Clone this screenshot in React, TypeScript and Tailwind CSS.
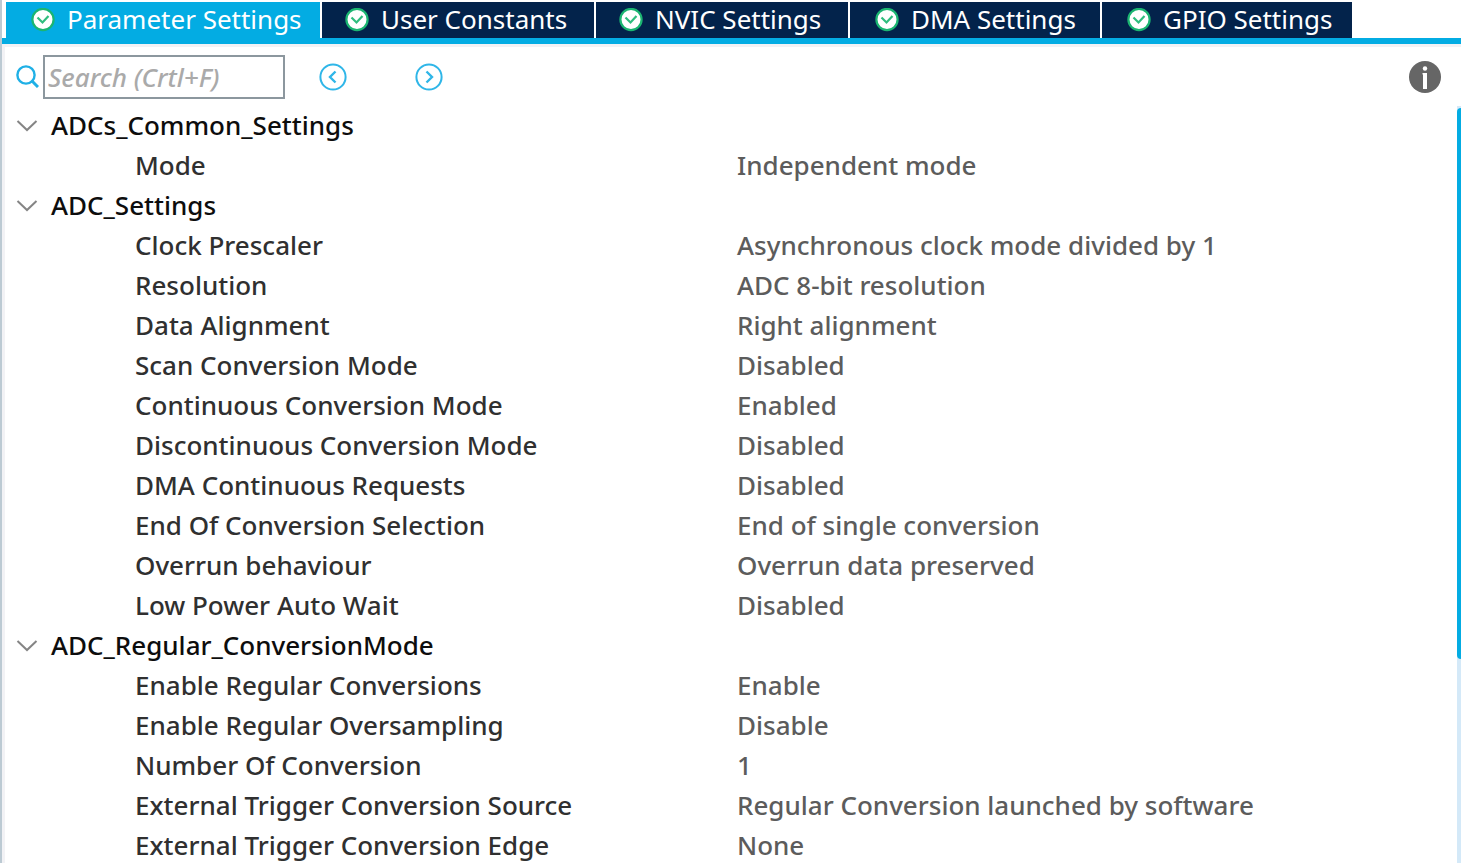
import React, { useState } from "react";

type Group = { name: string; rows: [string, string][] };

const tabs = [
  { label: "Parameter Settings", size: "w-[314px] pl-[25px]" },
  { label: "User Constants", size: "w-[272px] pl-[23px]" },
  { label: "NVIC Settings", size: "w-[252px] pl-[23px]" },
  { label: "DMA Settings", size: "w-[250px] pl-[25px]" },
  { label: "GPIO Settings", size: "w-[250px] pl-[25px]" },
];

const groups: Group[] = [
  { name: "ADCs_Common_Settings", rows: [["Mode", "Independent mode"]] },
  {
    name: "ADC_Settings",
    rows: [
      ["Clock Prescaler", "Asynchronous clock mode divided by 1"],
      ["Resolution", "ADC 8-bit resolution"],
      ["Data Alignment", "Right alignment"],
      ["Scan Conversion Mode", "Disabled"],
      ["Continuous Conversion Mode", "Enabled"],
      ["Discontinuous Conversion Mode", "Disabled"],
      ["DMA Continuous Requests", "Disabled"],
      ["End Of Conversion Selection", "End of single conversion"],
      ["Overrun behaviour", "Overrun data preserved"],
      ["Low Power Auto Wait", "Disabled"],
    ],
  },
  {
    name: "ADC_Regular_ConversionMode",
    rows: [
      ["Enable Regular Conversions", "Enable"],
      ["Enable Regular Oversampling", "Disable"],
      ["Number Of Conversion", "1"],
      ["External Trigger Conversion Source", "Regular Conversion launched by software"],
      ["External Trigger Conversion Edge", "None"],
    ],
  },
];

function CheckBadge() {
  return (
    <svg className="size-6 shrink-0" viewBox="0 0 24 24" fill="none" aria-hidden="true">
      <circle cx="12" cy="11.5" r="10.6" fill="#fff" stroke="#1bb571" strokeWidth="2.2" />
      <path d="M6.500 9.500l5 5L17.500 8" stroke="#2fbd7e" strokeWidth="2.200" />
    </svg>
  );
}

function CircleChevron({ d }: { d: string }) {
  return (
    <svg className="size-7" viewBox="0 0 28 28" fill="none" stroke="#2fb6e8" aria-hidden="true">
      <circle cx="14" cy="14" r="12.6" strokeWidth="2" />
      <path d={d} strokeWidth="2.4" />
    </svg>
  );
}

export default function App() {
  const [active, setActive] = useState(0);
  const [closed, setClosed] = useState<string[]>([]);
  const toggle = (name: string) =>
    setClosed((c) => (c.includes(name) ? c.filter((n) => n !== name) : [...c, name]));

  return (
    <div className="flex h-screen flex-col overflow-hidden border-l-2 border-[#bccad3] bg-white font-['Noto_Sans','Lucida_Grande',sans-serif] text-[26px] leading-[38px]">
      <div role="tablist" className="flex shrink-0 gap-0.5 border-b-6 border-[#03ace3] pt-0.5 pl-1">
        {tabs.map((t, i) => (
          <button
            key={t.label}
            role="tab"
            aria-selected={i === active}
            onClick={() => setActive(i)}
            className={`flex h-9 shrink-0 items-center gap-3 whitespace-nowrap text-white ${t.size} ${
              i === active ? "bg-[#03ace3]" : "bg-[#03234b]"
            }`}
          >
            <CheckBadge />
            <span className="pb-0.5">{t.label}</span>
          </button>
        ))}
      </div>

      <main className="flex min-h-0 grow flex-col border-t-3 border-l-3 border-[#f2f2f5]">
        <div className="flex h-[59px] shrink-0 items-center pr-5 pl-[11px]">
          <label htmlFor="search" aria-label="Search" className="mr-1">
            <svg className="size-[23px]" viewBox="0 0 23 23" fill="none" stroke="#1fb0e6" aria-hidden="true">
              <circle cx="10" cy="10" r="8.6" strokeWidth="2.4" />
              <path d="M15.5 15.5l6.500 6.500" strokeWidth="3" />
            </svg>
          </label>
          <input
            id="search"
            type="text"
            placeholder="Search (Crtl+F)"
            className="h-11 w-[242px] border-2 border-[#8c979e] px-[3px] font-medium outline-none placeholder:text-[#aaaaaa] placeholder:italic"
          />
          <button aria-label="Previous" className="ml-[34px]">
            <CircleChevron d="M16.500 8.500L11 14l5.500 5.500" />
          </button>
          <button aria-label="Next" className="ml-17">
            <CircleChevron d="M11.500 8.500L17 14l-5.500 5.500" />
          </button>
          <button aria-label="Information" className="ml-auto">
            <svg className="size-8" viewBox="0 0 32 32" aria-hidden="true">
              <circle cx="16" cy="16" r="16" fill="#666" />
              <circle cx="16" cy="7.500" r="2.200" fill="#fff" />
              <path d="M13.500 12h4.500v16h-4V13.500h-.5z" fill="#fff" />
            </svg>
          </button>
        </div>

        <div className="flex min-h-0 grow">
          <div className="min-w-0 grow overflow-hidden">
            <table className="w-full table-fixed border-collapse text-left">
              <colgroup>
                <col className="w-[732px]" />
                <col />
              </colgroup>
              {groups.map((g) => (
                <tbody key={g.name}>
                  <tr className="h-10">
                    <th colSpan={2} scope="rowgroup" className="p-0 font-medium">
                      <button
                        onClick={() => toggle(g.name)}
                        aria-expanded={!closed.includes(g.name)}
                        className="flex h-10 items-center gap-3 pl-[11px] text-[#0d0d0d]"
                      >
                        <svg className="h-3 w-[23px]" viewBox="0 0 23 12" fill="none" aria-hidden="true">
                          <path d="M1.500 1l9.500 9L20.500 1" stroke="#858585" strokeWidth="2" />
                        </svg>
                        <span className="pb-0.5">{g.name}</span>
                      </button>
                    </th>
                  </tr>
                  {!closed.includes(g.name) &&
                    g.rows.map(([name, value]) => (
                      <tr key={name} className="h-10">
                        <th scope="row" className="p-0 pb-0.5 pl-[130px] font-medium whitespace-nowrap text-[#303030]">
                          {name}
                        </th>
                        <td className="p-0 pb-0.5 font-medium whitespace-nowrap text-[#5c5c5c]">{value}</td>
                      </tr>
                    ))}
                </tbody>
              ))}
            </table>
          </div>
          <div className="flex w-1 shrink-0 flex-col bg-[#d4e9f8] pt-0.5" aria-hidden="true">
            <div className="h-[73%] rounded-l bg-[#03ace3]" />
          </div>
        </div>
      </main>
    </div>
  );
}
